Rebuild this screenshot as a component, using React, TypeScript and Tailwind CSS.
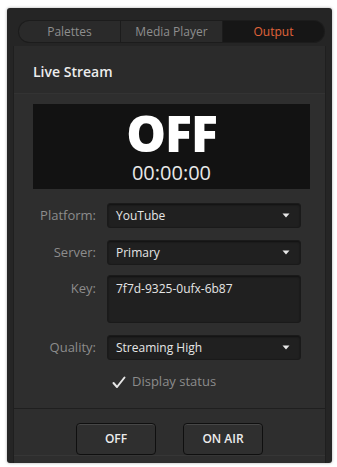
import React from 'react';

const Caret = () => (
    <svg width="8" height="5" viewBox="0 0 8 5" className="shrink-0">
        <path d="M0.5 0.5 H7.5 L4 4.5 Z" fill="#e8e8e8" />
    </svg>
);

const Select = ({ value }: { value: string }) => (
    <div className="w-[194px] h-[25px] rounded-[3px] bg-[#202020] border border-[#1a1a1a] shadow-[inset_0_1px_2px_rgba(0,0,0,0.5)] flex items-center justify-between pl-[8px] pr-[10px]">
        <span className="text-[12px] text-[#e6e6e6]">{value}</span>
        <Caret />
    </div>
);

const Row = ({ label, children, top = false }: { label: string; children: React.ReactNode; top?: boolean }) => (
    <div className={`flex ${top ? 'items-start' : 'items-center'} gap-[11px]`}>
        <span className={`w-[70px] text-right text-[13px] text-[#8c8c8c] ${top ? 'pt-[4px]' : ''}`}>{label}</span>
        {children}
    </div>
);

const tabs = ['Palettes', 'Media Player', 'Output'];

export default function App() {
    return (
        <div className="w-[337px] h-[467px] bg-white pt-[8px] pl-[7px]" style={{ fontFamily: '"Open Sans", "Liberation Sans", sans-serif' }}>
            <div className="w-[325px] h-[455px] bg-[#252525] rounded-[3px] shadow-[0_0_3px_rgba(0,0,0,0.35)] flex flex-col">
                {/* tabs */}
                <div className="mt-[12px] ml-[11px] w-[307px] h-[23px] rounded-full bg-[#1c1c1c] p-[1px] flex">
                    {tabs.map((t, i) => {
                        const active = i === 2;
                        return (
                            <div
                                key={t}
                                className={`flex-1 flex items-center justify-center text-[12px] ${i === 0 ? 'rounded-l-full' : ''} ${i === 2 ? 'rounded-r-full' : ''} ${active ? 'bg-[#161616] text-[#e0643a]' : 'bg-[#2a2a2a] text-[#8e8e8e]'} ${i === 1 ? 'border-x border-[#1c1c1c]' : ''}`}
                            >
                                {t}
                            </div>
                        );
                    })}
                </div>

                {/* content */}
                <div className="mt-[3px] ml-[6px] w-[313px] flex-1 bg-[#2b2b2b] border-x border-[#1f1f1f] flex flex-col">
                    <div className="h-[47px] pl-[19px] pt-[16px] text-[14px] leading-[20px] font-semibold text-[#ededed]">Live Stream</div>
                    <div className="flex-1 bg-[#2e2e2e] border-t border-[#333] flex flex-col">
                        <div className="mt-[10px] ml-[19px] w-[277px] h-[85px] bg-[#121212] flex flex-col items-center pt-[4px]">
                            <span className="text-[50px] leading-[50px] font-extrabold text-white tracking-[-1px]">OFF</span>
                            <span className="text-[20px] leading-[20px] text-[#e8e8e8] mt-[5px]">00:00:00</span>
                        </div>

                        <div className="mt-[14px] ml-[12px] flex flex-col">
                            <Row label="Platform:">
                                <Select value="YouTube" />
                            </Row>
                            <div className="mt-[12px]">
                                <Row label="Server:">
                                    <Select value="Primary" />
                                </Row>
                            </div>
                            <div className="mt-[10px]">
                                <Row label="Key:" top>
                                    <div className="w-[194px] h-[48px] rounded-[3px] bg-[#202020] border border-[#1a1a1a] shadow-[inset_0_1px_2px_rgba(0,0,0,0.5)] pl-[8px] pt-[4px] text-[12px] text-[#e6e6e6]">
                                        7f7d-9325-0ufx-6b87
                                    </div>
                                </Row>
                            </div>
                            <div className="mt-[12px]">
                                <Row label="Quality:">
                                    <Select value="Streaming High" />
                                </Row>
                            </div>
                        </div>

                        <div className="mt-[13px] h-[18px] ml-[98px] flex items-center gap-[6px]">
                            <svg width="14" height="13" viewBox="0 0 14 13">
                                <path d="M1.5 7 L5 11 L12.5 1.5" stroke="#e6e6e6" strokeWidth="2" fill="none" strokeLinecap="round" strokeLinejoin="round" />
                            </svg>
                            <span className="text-[13px] text-[#8c8c8c]">Display status</span>
                        </div>

                        <div className="mt-[17px] border-t border-[#1f1f1f] shadow-[0_1px_0_#363636] flex justify-center gap-[27px] pt-[14px]">
                            {['OFF', 'ON AIR'].map((b) => (
                                <div
                                    key={b}
                                    className="w-[80px] h-[32px] rounded-[4px] bg-[#2f2f2f] border border-[#0f0f0f] shadow-[inset_0_1px_0_#474747] flex items-center justify-center text-[12px] font-semibold text-[#ececec]"
                                >
                                    {b}
                                </div>
                            ))}
                        </div>
                    </div>
                </div>
            </div>
        </div>
    );
}
